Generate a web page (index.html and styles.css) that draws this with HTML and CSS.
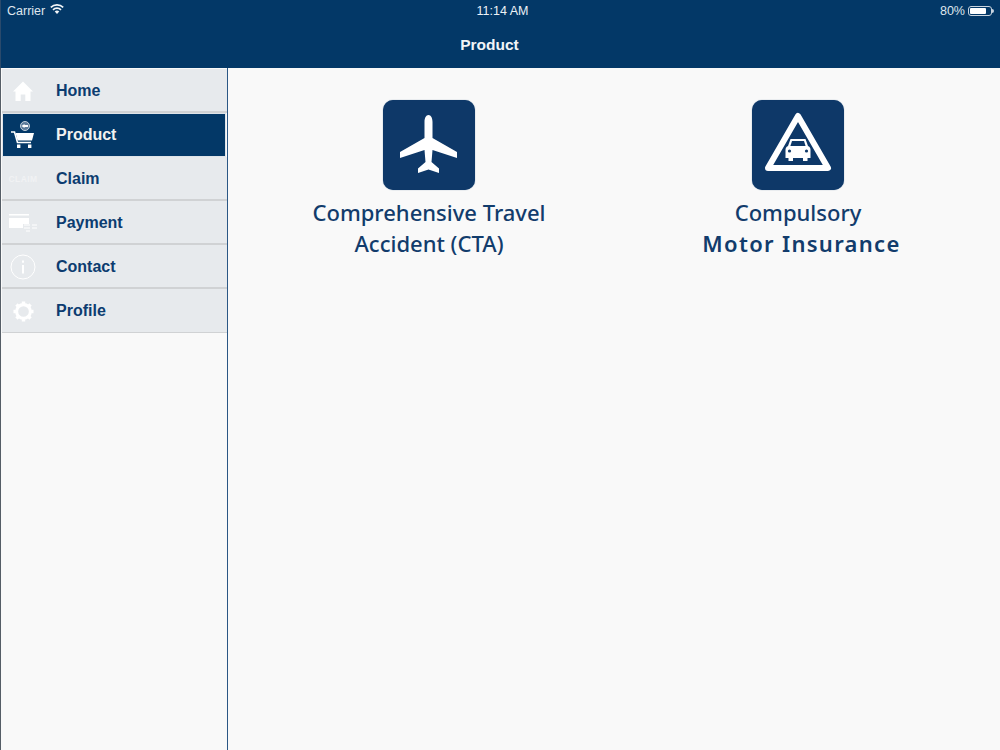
FILE: index.html
```html
<!DOCTYPE html>
<html>
<head>
    <title>Product</title>
    <link rel="stylesheet" href="styles.css">
</head>
<body>
    <div class="app">
        <header class="topbar">
            <div class="status">
                <div class="status-left">
                    <span>Carrier</span>
                    <svg class="wifi" width="14" height="10" viewBox="0 0 14 10">
                        <path d="M7 10 L4.7 7.5 A3.4 3.4 0 0 1 9.3 7.5 Z" fill="#f2f5f8"/>
                        <path d="M.8 3.4 A9 9 0 0 1 13.2 3.4" fill="none" stroke="#f2f5f8" stroke-width="1.7"/>
                        <path d="M3 5.8 A5.7 5.7 0 0 1 11 5.8" fill="none" stroke="#f2f5f8" stroke-width="1.7"/>
                    </svg>
                </div>
                <div class="status-time">11:14 AM</div>
                <div class="status-right">
                    <span>80%</span>
                    <div class="battery"><div class="battery-level"></div></div>
                    <div class="battery-cap"></div>
                </div>
            </div>
            <div class="title">Product</div>
        </header>

        <div class="main">
            <nav class="sidebar">
                <a class="nav-item">
                    <span class="nav-icon">
                        <svg width="20" height="20" viewBox="0 0 20 20">
                            <path d="M10 .5 L20 10.5 H17.5 V20 H12.3 V13.5 H7.7 V20 H2.5 V10.5 H0 Z" fill="#fff"/>
                        </svg>
                    </span>
                    Home
                </a>
                <a class="nav-item active">
                    <span class="nav-icon">
                        <svg width="24" height="27" viewBox="0 0 24 27">
                            <circle cx="14" cy="5" r="4.5" fill="#5d7c9b" stroke="#c3cfda" stroke-width="1"/>
                            <path d="M10.5 5 L13.5 3 V4 H17 V6 H13.5 V7 Z" fill="#fff"/>
                            <path d="M0 11 H3.5 L6.5 21.5 H20" fill="none" stroke="#fff" stroke-width="1.6"/>
                            <path d="M4.6 12 H23 L21 19.5 H6.6 Z" fill="#fff"/>
                            <rect x="6" y="23.5" width="3.4" height="3.5" fill="#fff"/>
                            <rect x="17" y="23.5" width="3.4" height="3.5" fill="#fff"/>
                        </svg>
                    </span>
                    Product
                </a>
                <a class="nav-item">
                    <span class="nav-icon"><span class="claim-mark">CLAIM</span></span>
                    Claim
                </a>
                <a class="nav-item">
                    <span class="nav-icon">
                        <svg width="30" height="18" viewBox="0 0 30 18">
                            <rect x="1" y="0" width="20" height="1.5" fill="#fff"/>
                            <rect x="1" y="4" width="20" height="10" fill="#fff"/>
                            <rect x="15" y="10" width="14" height="8" fill="#e7eaed"/>
                            <path d="M16 11 H22 M24 11 H29 M16 14 H22 M24 14 H29 M18 17 H22" stroke="#fff" stroke-width="1"/>
                        </svg>
                    </span>
                    Payment
                </a>
                <a class="nav-item">
                    <span class="nav-icon">
                        <svg width="26" height="26" viewBox="0 0 26 26">
                            <circle cx="13" cy="13" r="12" fill="none" stroke="#fff" stroke-width="1"/>
                            <rect x="12" y="11" width="2" height="8.5" fill="#fff"/>
                            <rect x="12" y="6.5" width="2" height="2.2" fill="#fff"/>
                        </svg>
                    </span>
                    Contact
                </a>
                <a class="nav-item">
                    <span class="nav-icon">
                        <svg width="21" height="21" viewBox="0 0 22 22">
                            <circle cx="11" cy="11" r="7.2" fill="none" stroke="#fff" stroke-width="3.2"/>
                            <path d="M11 .5 V3 M11 19 V21.5 M.5 11 H3 M19 11 H21.5 M3.6 3.6 L5.4 5.4 M16.6 16.6 L18.4 18.4 M3.6 18.4 L5.4 16.6 M16.6 5.4 L18.4 3.6" stroke="#fff" stroke-width="3.6"/>
                        </svg>
                    </span>
                    Profile
                </a>
            </nav>

            <section class="content">
                <div class="product">
                    <div class="tile">
                        <svg width="60" height="60" viewBox="0 0 60 60">
                            <path d="M29.5 0 C32 0 33.5 3 33.5 7 V23 L58 37 V43 L33.5 35 L32.5 47 L40 53.5 V58 L29.5 54.5 L19 58 V53.5 L26.5 47 L25.5 35 L1 43 V37 L25.5 23 V7 C25.5 3 27 0 29.5 0 Z" fill="#fff"/>
                        </svg>
                    </div>
                    <div class="product-name">Comprehensive Travel<br>Accident (CTA)</div>
                </div>
                <div class="product">
                    <div class="tile">
                        <svg width="68" height="67" viewBox="0 0 68 67">
                            <path d="M34 4 L64 56 H4 Z" fill="none" stroke="#fff" stroke-width="6" stroke-linejoin="round"/>
                            <path d="M26.5 27 H41.5 L44 34 C46 35 46.5 36 46.5 38 V46 H43.5 V49 H39 V46 H29 V49 H24.5 V46 H21.5 V38 C21.5 36 22 35 24 34 Z" fill="#fff"/>
                            <path d="M28 29 H40 L41.6 34 H26.4 Z" fill="#0e3868"/>
                            <circle cx="25.5" cy="39" r="1.6" fill="#0e3868"/>
                            <circle cx="42.5" cy="39" r="1.6" fill="#0e3868"/>
                        </svg>
                    </div>
                    <div class="product-name">Compulsory<br><span class="strong">Motor Insurance</span></div>
                </div>
            </section>
        </div>
    </div>
</body>
</html>
```

FILE: styles.css
```css
html, body { margin: 0; padding: 0; }
body { font-family: "Liberation Sans", Arial, sans-serif; background: #f9f9f9; }

.app { width: 1000px; height: 750px; display: flex; flex-direction: column; overflow: hidden; }

.topbar { height: 68px; background: #033867; color: #fff; flex-shrink: 0; border-left: 1px solid #2a4a6c; box-sizing: border-box; }
.status { height: 21px; display: grid; grid-template-columns: 1fr auto 1fr; align-items: center; padding: 0 6px; font-size: 12.5px; color: #dfe6ed; }
.status-left { display: flex; align-items: center; gap: 5px; }
.wifi { margin-top: -3px; }
.status-time { color: #eef2f6; padding-left: 4px; }
.status-right { display: flex; align-items: center; justify-content: flex-end; }
.battery { width: 20px; height: 6px; border: 1px solid #c9d4df; border-radius: 3px; padding: 1px; margin-left: 3px; }
.battery-level { width: 16px; height: 6px; background: #fff; border-radius: 1px; }
.battery-cap { width: 2px; height: 4px; background: #c9d4df; border-radius: 0 2px 2px 0; }
.title { text-align: center; font-size: 15.5px; font-weight: bold; line-height: 20px; margin-top: 14px; padding-right: 22px; color: #f2f5f8; }

.main { flex: 1; display: flex; border-left: 1px solid #555d66; }

.sidebar { width: 226px; flex-shrink: 0; border-right: 1px solid #2b5785; padding-top: 1px; }
.nav-item { height: 41px; padding-top: 1px; display: flex; align-items: center; margin-left: 1px; background: #e7eaed; border-bottom: 2px solid #d0d2d4; color: #0c3c70; font-size: 16px; font-weight: bold; }
.nav-item:last-child { height: 42px; border-bottom-width: 1px; }
.nav-item.active { background: #033867; color: #f2f2f0; border-bottom: 1px solid #e7eaed; height: 43px; padding-top: 0; margin-right: 1px; outline: 1px solid #dfe4e9; outline-offset: -1px; }
.nav-icon { width: 42px; height: 100%; display: flex; align-items: center; justify-content: center; margin-right: 12px; flex-shrink: 0; }
.claim-mark { font-size: 8.5px; letter-spacing: .4px; color: #f1f2f4; }

.content { flex: 1; display: flex; padding-top: 32px; }
.product { display: flex; flex-direction: column; align-items: center; }
.product:first-child { width: 402px; }
.product:last-child { width: 338px; margin-left: -1px; }
.tile { width: 92px; height: 90px; background: #0e3868; border-radius: 10px; box-shadow: 0 0 1px #5d7c9b; display: flex; align-items: center; justify-content: center; }
.product-name { margin-top: 7px; font-family: "Noto Sans", sans-serif; font-size: 22px; font-weight: 500; line-height: 31px; color: #123c6c; text-align: center; }
.strong { display: inline-block; padding-left: 7px; font-weight: 600; letter-spacing: 1.3px; }
```
